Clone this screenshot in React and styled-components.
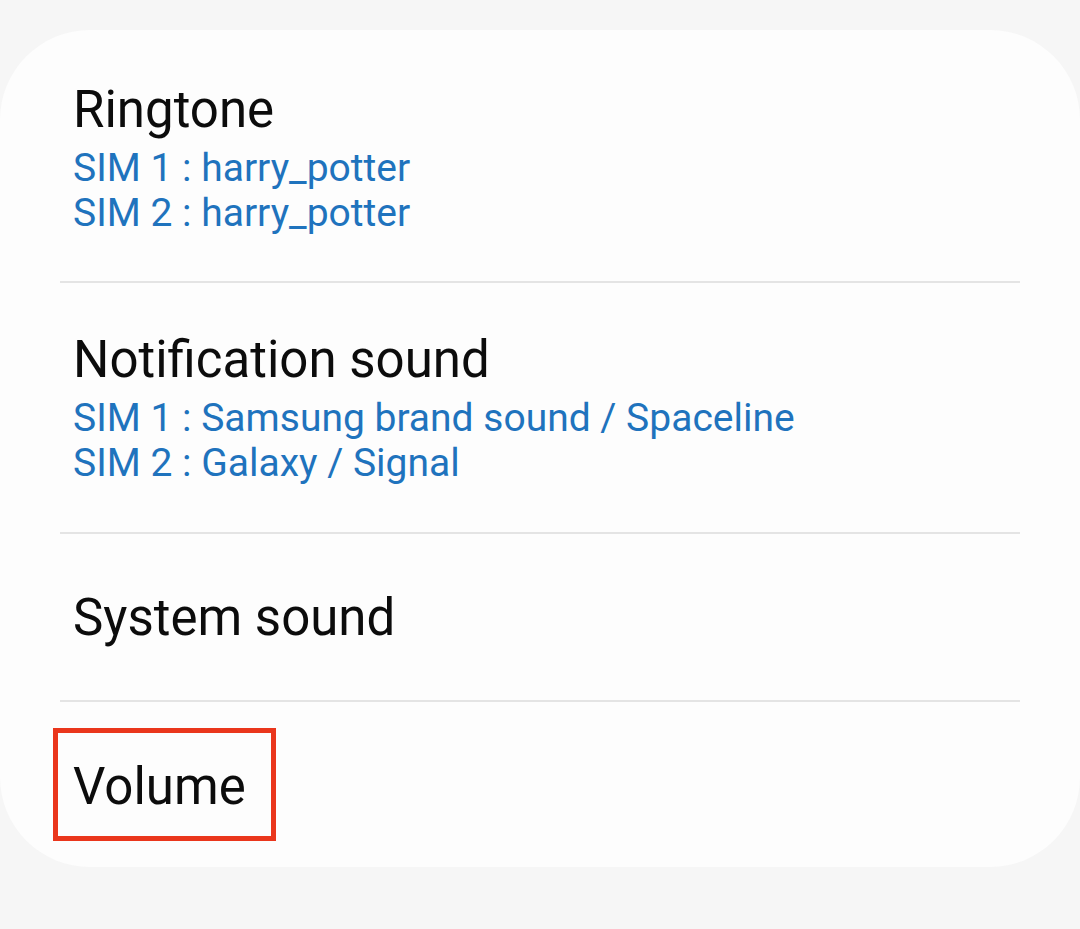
import React from 'react';
import styled, { createGlobalStyle } from 'styled-components';

const GlobalStyle = createGlobalStyle`
  html, body {
    margin: 0;
    padding: 0;
    background: #f6f6f6;
  }
  body {
    font-family: Roboto, "Noto Sans", "Liberation Sans", sans-serif;
    -webkit-font-smoothing: antialiased;
  }
`;

// paddings per row are [top, bottom]
const sounds = [
  {
    title: 'Ringtone',
    lines: ['SIM 1 : harry_potter', 'SIM 2 : harry_potter'],
    pad: [50, 45],
  },
  {
    title: 'Notification sound',
    lines: ['SIM 1 : Samsung brand sound / Spaceline', 'SIM 2 : Galaxy / Signal'],
    pad: [47, 46],
  },
  { title: 'System sound', lines: [], pad: [54, 52] },
  { title: 'Volume', lines: [], pad: [55, 0], marked: true },
];

function App() {
  return (
    <>
      <GlobalStyle />
      <Page>
        <Card>
          {sounds.map((item, idx) => (
            <Row key={idx} $pad={item.pad} $last={idx === sounds.length - 1}>
              <Title>
                {item.marked ? <Marked>{item.title}</Marked> : item.title}
              </Title>
              {item.lines.length > 0 && (
                <Summary>
                  {item.lines.map((ln, i) => (
                    <div key={i}>{ln}</div>
                  ))}
                </Summary>
              )}
            </Row>
          ))}
        </Card>
      </Page>
    </>
  );
}

const Page = styled.div`
  width: 1080px;
  height: 929px;
  padding-top: 30px;
  box-sizing: border-box;
`;

const Card = styled.div`
  background: #fdfdfd;
  border-radius: 90px;
  height: 837px;
  padding: 0 60px;
  box-sizing: border-box;
  display: flex;
  flex-direction: column;
`;

const Row = styled.div`
  padding: ${(p) => `${p.$pad[0]}px 13px ${p.$pad[1]}px`};
  border-bottom: ${(p) => (p.$last ? 'none' : '2px solid #e4e4e4')};
`;

const Title = styled.div`
  font-size: 51px;
  line-height: 60px;
  color: #0c0c0c;
`;

const Marked = styled.span`
  position: relative;
  display: inline-block;

  &::after {
    content: '';
    position: absolute;
    top: -29px;
    left: -20px;
    width: 223px;
    height: 113px;
    box-sizing: border-box;
    border: 5px solid #ea361c;
  }
`;

const Summary = styled.div`
  margin-top: 6px;
  font-size: 39px;
  line-height: 45px;
  color: #1f73bd;
`;

export default App;
